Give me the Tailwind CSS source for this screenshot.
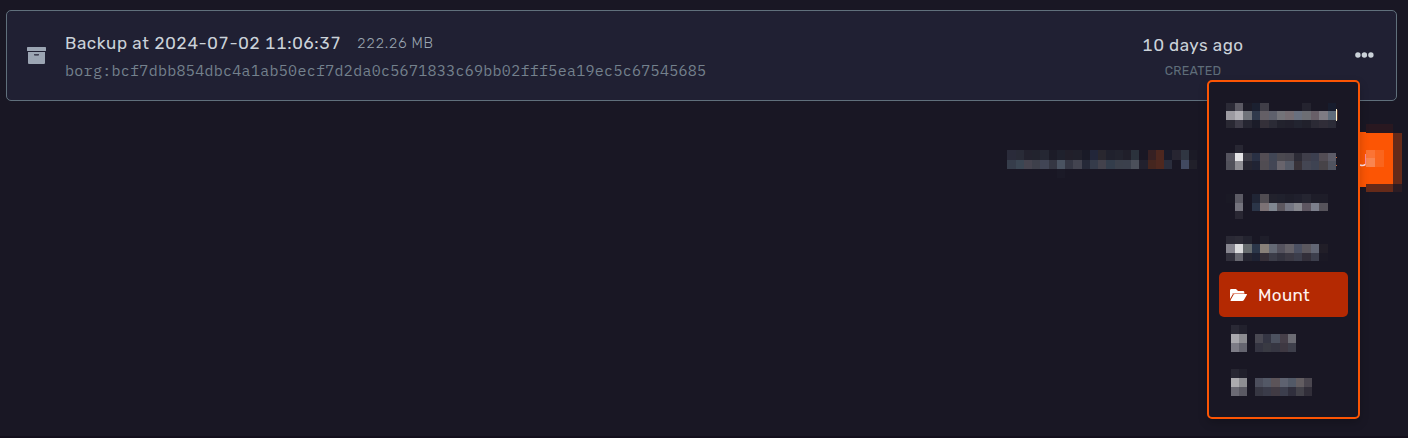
<!DOCTYPE html>
<html lang="en">
<head>
<meta charset="utf-8">
<title>Backups</title>
<script src="https://cdn.jsdelivr.net/npm/@tailwindcss/browser@4"></script>
</head>
<body class="relative h-[438px] overflow-hidden border-b-2 border-[#130f1c] bg-[#191724] font-['Rubik','Roboto',sans-serif] pt-[10px] pl-[6px] pr-[11px]">
<section class="flex h-[91px] items-center rounded-[5px] border border-[#60707c] bg-[#202033] pl-[20px] pr-[22px]">
  <svg class="mb-px h-[17px] w-[19px] shrink-0" viewBox="0 0 19 17"><path fill="#9ba5b3" d="M.6 0h17.8q.6 0 .6.6v2.8q0 .6-.6.6H.6Q0 4 0 3.400V.6Q0 0 .6 0z"/><path fill="#9ba5b3" fill-rule="evenodd" d="M1 5h17v11q0 1-1 1H2q-1 0-1-1zM7 7.200v.6q0 .7.7.7h3.600q.7 0 .7-.7v-.6z"/></svg>
  <div class="ml-[19px] flex flex-col pt-[3px]">
    <div class="flex h-6 items-center whitespace-nowrap">
      <h2 class="w-[292px] text-[17px] tracking-[0.56px] text-[#cbd2d9]">Backup at <span class="tabular-nums">2024-07-02 11:06:37</span></h2>
      <span class="text-[14.5px] font-light tracking-[0.55px] text-[#9aa5b1] tabular-nums">222.26 MB</span>
    </div>
    <p class="mt-[3px] h-6 font-['IBM_Plex_Mono','Liberation_Mono',monospace] text-[15px] leading-6 tracking-[0.295px] text-[#74818d]">borg:bcf7dbb854dbc4a1ab50ecf7d2da0c5671833c69bb02fff5ea19ec5c67545685</p>
  </div>
  <div class="ml-auto flex w-[102px] flex-col items-center pt-[3px] whitespace-nowrap">
    <p class="h-6 text-[17px] leading-6 tracking-[0.5px] text-[#cbd2d9] tabular-nums">10 days ago</p>
    <p class="mt-[4px] h-5 text-[12.5px] leading-5 tracking-[0.25px] text-[#5f6d79]">CREATED</p>
  </div>
  <svg class="mb-px ml-[111px] h-[6px] w-[19px] shrink-0" viewBox="0 0 19 6" fill="#cbd2d9"><circle cx="2.900" cy="3" r="2.700"/><circle cx="9.400" cy="3" r="2.700"/><circle cx="15.900" cy="3" r="2.700"/></svg>
</section>

<div class="mt-[23px] -mr-[5px] flex justify-end">
  <svg class="mr-[153px] h-[68px] w-[195px]" data-x="0 9 17 25 33 42 50 58 66 75 83 91 99 108 116 124 132 141 149 157 165 174 182 190" data-y="26 36 45 54" data-c="2a2b3a 292b37 23222e 22232e 252733 1c1c28 1f212d 211f2a 20202b 191a27 22263a 29272f 20212d 22232e 201f2a 2b323c - 362023 4d271f 1a1b2a 272531 303642 1b1a26/363d4b 3b4653 46444f 3e404b 414555 353743 4a5361 353744 434450 252938 353b4a 43424c 333d4b 3b404b 3b404c 4b4f5a 22212e 45261f 4e281f 2a2d3c - 414960 21202a/- - - - - - 1b1a27"></svg>
  <svg class="h-[68px] w-[47px]" viewBox="0 0 47 68" shape-rendering="crispEdges">
    <path fill="#291820" d="M11 0h27v9H11z"/><path fill="#fc5504" d="M0 8h11v1h27v51H11v3H0z"/>
    <path fill="#652a19" d="M38 9h9v51h-9zM11 60h27v8H11z"/><path fill="#2c1c23" d="M38 60h9v8h-9z"/>
    <path fill="#fb7435" d="M11 26h9v8h-9z"/><path fill="#f98550" d="M11 34h9v9h-9z"/><path fill="#fa651d" d="M20 26h9v17h-9z"/>
    <path fill="none" stroke="#ffe3ec" stroke-width="1.500" shape-rendering="auto" d="M5 41q3 1.200 5.500-.6"/><path fill="#ff8798" d="M10 30h1v10h-1z"/>
  </svg>
</div>

<nav class="absolute top-[80px] left-[1207px] w-[153px] rounded-[5px] border-2 border-[#fc5504] bg-[#191724] p-[10px] shadow-[0_4px_10px_rgba(0,0,0,0.2)]">
  <div class="h-[45px]"><svg class="h-[45px] w-[129px]" data-x="7 16 24 33 41 50 58 66 75 83 92 100 109 117" data-y="11 19 28 36" data-c="2b2a36 5b5963 1c1b27 1b2030 403e48 - - - - 24232f - - 171c2d/9c9aa1 b3b1b7 70737a 303a4c 645f66 5e606c 737379 756d73 69707f 6d6e74 685f68 7e7b83 5f6c7b/292833 3e3c48 252531 1b1c29 343039 2b2b36 22222d 21202c 222430 21212c 2b2a35 302d38 2b2b37"><path fill="#fff4cf" d="M117 17h1v12h-1z"/><path fill="#71412d" d="M118 18h.7v10h-.7z"/></svg></div>
  <div class="h-[45px]"><svg class="h-[45px] w-[129px]" data-x="7 16 24 33 41 50 58 66 75 83 92 100 109 117" data-y="8 16 24 33" data-c="- 282733/55545f e5e4e7 3c3b46 293044 534d54 414655 4b4950 48464f 2c2b36 3f3e4a 3c3f4f 524c54 5c5b67/50505a 8e8d93 252430 202334 504c52 434655 68646c 555a67 383238 444653 3e4352 474348 50535f"><path fill="#c66a3f" d="M117 20h1v1h-1zM117 28h1v1h-1z"/></svg></div>
  <div class="h-[45px]"><svg class="h-[45px] w-[129px]" data-x="7 16 24 33 41 50 58 66 75 83 92 100 109" data-y="12 21 29 37" data-c="1a1925 5c5b65 - 202535 504c52 22222d 20212d 1e1e2a 20202d 252531 1e1d29 1e1d29/- 74737d - 2b3548 7c7275 808791 5c575f 737582 86878e 5d5661 7c7f8c 56535b/- 292733"></svg></div>
  <div class="h-[45px]"><svg class="h-[45px] w-[129px]" data-x="7 16 24 33 41 50 58 66 75 83 92 100 109" data-y="9 17 26 34" data-c="2a2935 2d2c37 23232f - 1f1e2a/878690 dcdcde 666b6e 2b3649 888079 646975 54525e 646168 4b5062 5b585f 626674 211e28/31303c 686871 252531 1e2233 352f38 3b3c48 33333f 3b3944 3c3e4c 322f3a 3c3e4c 1b1925"></svg></div>
  <a class="flex h-[45px] items-center rounded-[5px] bg-[#b42902] pl-[11px] text-[17px] tracking-[0.35px] text-[#fff3ef]">
    <svg class="mr-[11px] h-[12px] w-[17px]" viewBox="0 0 17 12"><path fill="#fff" d="M0 10V1.200Q0 0 1.200 0H6l2 2h5q1.300 0 1.300 1.300V4H5Q3.500 4 2.800 5.200z"/><path fill="#e59885" d="M2.500 4h12v1.400h-12z"/><path fill="#fff" d="M4.900 5h11.600q.8 0 .4.800l-3 5.200q-.6 1-1.700 1H1.200q-1.100 0-.6-.9l3-5.300q.4-.8 1.300-.8z"/></svg>
    <span class="pt-[2px]">Mount</span>
  </a>
  <div class="h-[45px]"><svg class="h-[45px] w-[129px]" data-x="12 20 28 36 44 52 61 69 77" data-y="8 17 26 35" data-c="2a2935 22212d/a9a8ad 8c8c91 - 494852 343543 4c515f 463f49 6b6b73/7d7c86 656570 - 343441 393a43 363642 3e3842 3e3f4b"></svg></div>
  <div class="h-[45px]"><svg class="h-[45px] w-[129px]" data-x="12 20 28 36 44 52 61 69 77 85 93" data-y="7 16 25 34" data-c="272632 201f2b/acabaf 8d8d92 - 4c4e5c 535866 5c5459 5e6270 525967 625d61 4a464f/6b6a74 5a5963 - 363642 3a3b49 413b44 3c3e4d 302f3d 424149 312e39"></svg></div>
</nav>

<script>
// Paints the pixelated labels: edges in data-x / data-y, rows of hex colours in data-c.
document.querySelectorAll('svg[data-c]').forEach(svg => {
  const xs = svg.dataset.x.split(' ').map(Number), ys = svg.dataset.y.split(' ').map(Number);
  svg.dataset.c.split('/').forEach((row, r) => row.split(' ').forEach((c, i) => {
    if (c === '-') return;
    const e = document.createElementNS('http://www.w3.org/2000/svg', 'rect');
    e.setAttribute('x', xs[i]); e.setAttribute('y', ys[r]);
    e.setAttribute('width', xs[i + 1] - xs[i]); e.setAttribute('height', ys[r + 1] - ys[r]);
    e.setAttribute('fill', '#' + c);
    svg.appendChild(e);
  }));
});
</script>
</body>
</html>
